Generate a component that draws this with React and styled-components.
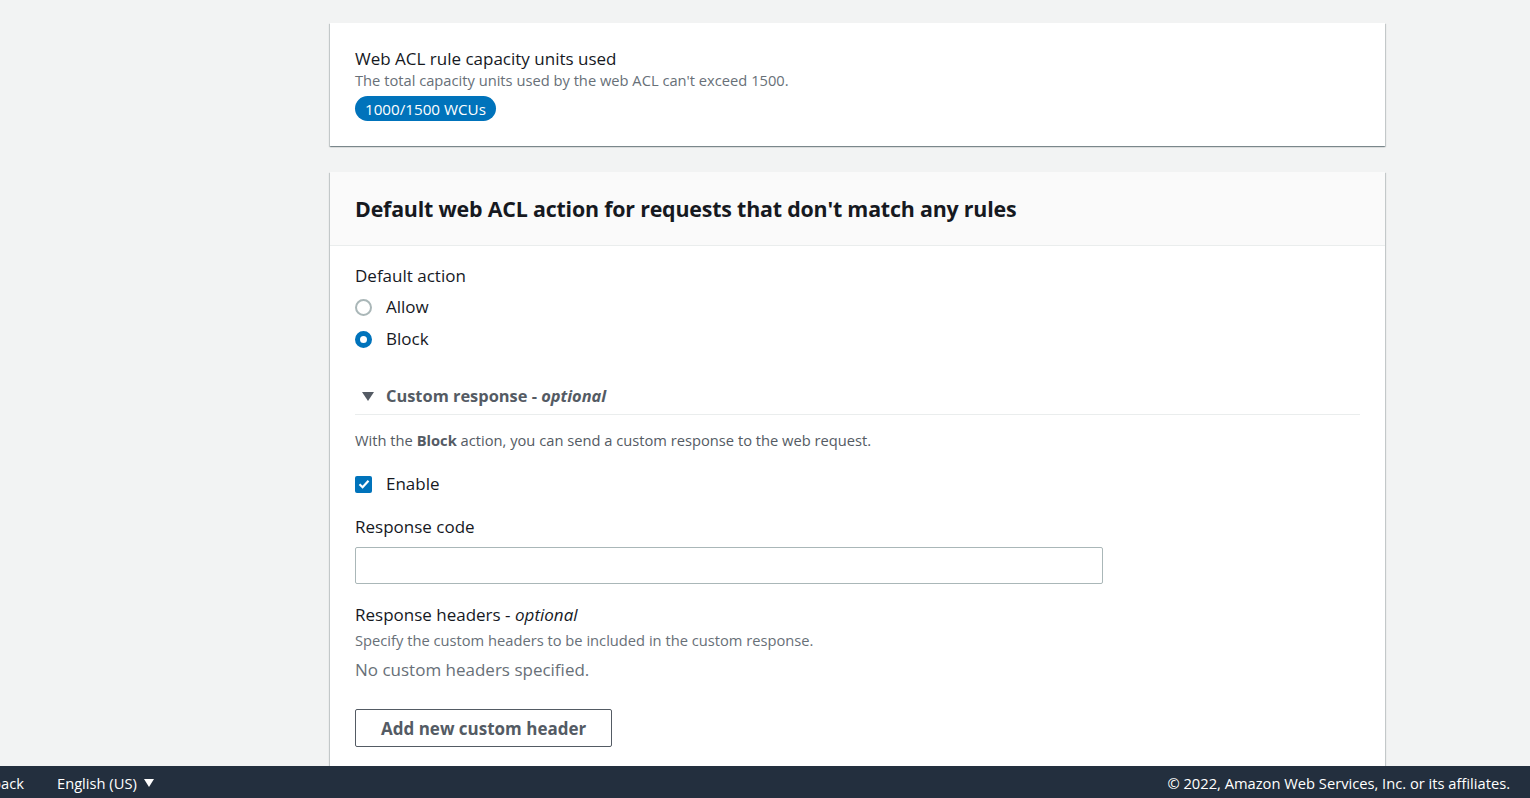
import React from "react";
import styled, { createGlobalStyle } from "styled-components";

const GlobalStyle = createGlobalStyle`
  html, body {
    margin: 0;
    padding: 0;
    background: #f2f3f3;
    font-family: "Open Sans", "Noto Sans", sans-serif;
    color: #16191f;
  }
  * { box-sizing: border-box; }
`;

const Page = styled.div`
  height: 798px;
  display: flex;
  flex-direction: column;
  overflow: hidden;
`;

const Main = styled.div`
  flex: 1;
  overflow: hidden;
  padding: 23px 0 0 330px;
  display: flex;
  flex-direction: column;
  gap: 26px;
`;

const Card = styled.section`
  width: 1055px;
  background: #fff;
  box-shadow: 0 1px 1px 0 rgba(0, 28, 36, 0.3), 1px 1px 1px 0 rgba(0, 28, 36, 0.15),
    -1px 1px 1px 0 rgba(0, 28, 36, 0.15);
  flex-shrink: 0;
`;

const CardBody = styled.div`
  padding: ${(p) => p.$pad || "20px 25px"};
`;

const CardHeader = styled.div`
  background: #fafafa;
  border-bottom: 1px solid #eaeded;
  padding: 23px 25px 22px;
`;

const HeaderTitle = styled.h2`
  margin: 0;
  font-size: 21.4px;
  line-height: 28px;
  font-weight: 700;
  letter-spacing: -0.2px;
`;

const Label = styled.div`
  font-size: 17px;
  line-height: 22px;
`;

const Hint = styled.div`
  font-size: 14.7px;
  line-height: 20px;
  color: #687078;
  margin-top: ${(p) => p.$mt || 0}px;
`;

const Badge = styled.span`
  display: inline-flex;
  align-items: center;
  height: 25px;
  padding: 0 10px;
  margin-top: 6px;
  border-radius: 13px;
  background: #0073bb;
  color: #fff;
  font-size: 15.2px;
  font-weight: 500;
`;

const RadioGroup = styled.div`
  display: flex;
  flex-direction: column;
  gap: 10px;
  margin-top: 9px;
`;

const Option = styled.label`
  display: flex;
  align-items: center;
  gap: 14px;
  font-size: 17px;
  line-height: 22px;
`;

const RadioDot = styled.span`
  width: 17px;
  height: 17px;
  border-radius: 50%;
  border: ${(p) => (p.$checked ? "5px solid #0073bb" : "2px solid #aab7b8")};
  background: #fff;
  flex-shrink: 0;
`;

const Expander = styled.div`
  margin-top: 35px;
  display: flex;
  align-items: center;
  gap: 12px;
  padding: 0 0 7px 7px;
  border-bottom: 1px solid #eaeded;
  font-size: 16.4px;
  font-weight: 700;
  color: #545b64;
  line-height: 22px;

  em { font-weight: 700; }
`;

const Caret = styled.span`
  width: 0;
  height: 0;
  border-left: 6px solid transparent;
  border-right: 6px solid transparent;
  border-top: 9px solid #545b64;
`;

const Para = styled.p`
  margin: 15px 0 0;
  font-size: 14.7px;
  line-height: 20px;
  color: #545b64;
  b { font-weight: 700; }
`;

const CheckRow = styled(Option)`
  margin-top: 23px;
`;

const CheckBox = styled.span`
  width: 17px;
  height: 17px;
  border-radius: 2px;
  background: #0073bb;
  display: flex;
  align-items: center;
  justify-content: center;
  flex-shrink: 0;
`;

const Field = styled.div`
  margin-top: ${(p) => p.$mt}px;
`;

const Input = styled.input`
  display: block;
  width: 748px;
  height: 37px;
  margin-top: 9px;
  border: 1px solid #aab7b8;
  border-radius: 2px;
  font: inherit;
  padding: 0 10px;
  outline: none;
`;

const Empty = styled.div`
  margin-top: 9px;
  font-size: 17px;
  line-height: 22px;
  color: #687078;
`;

const Button = styled.button`
  margin-top: 28px;
  height: 38px;
  padding: 0 25px;
  border: 1px solid #545b64;
  border-radius: 2px;
  background: #fff;
  color: #545b64;
  font: inherit;
  font-size: 17px;
  font-weight: 700;
`;

const Footer = styled.footer`
  height: 32px;
  flex-shrink: 0;
  background: #232f3e;
  color: #fff;
  font-size: 14.7px;
  display: flex;
  align-items: center;
  padding: 1px 20px 0 0;
`;

const FooterLink = styled.span`
  margin-left: ${(p) => p.$ml}px;
  display: flex;
  align-items: center;
  gap: 7px;
  white-space: nowrap;
`;

const SmallCaret = styled.span`
  width: 0;
  height: 0;
  border-left: 5px solid transparent;
  border-right: 5px solid transparent;
  border-top: 8px solid #fff;
`;

const Copyright = styled.span`
  margin-left: auto;
`;

const App = () => (
  <>
    <GlobalStyle />
    <Page>
      <Main>
        <Card>
          <CardBody $pad="25px 25px 25px">
            <Label>Web ACL rule capacity units used</Label>
            <Hint>The total capacity units used by the web ACL can't exceed 1500.</Hint>
            <Badge>1000/1500 WCUs</Badge>
          </CardBody>
        </Card>
        <Card>
          <CardHeader>
            <HeaderTitle>Default web ACL action for requests that don't match any rules</HeaderTitle>
          </CardHeader>
          <CardBody $pad="19px 25px 40px">
            <Label>Default action</Label>
            <RadioGroup>
              <Option>
                <RadioDot />
                Allow
              </Option>
              <Option>
                <RadioDot $checked />
                Block
              </Option>
            </RadioGroup>
            <Expander>
              <Caret />
              <span>
                Custom response - <em>optional</em>
              </span>
            </Expander>
            <Para>
              With the <b>Block</b> action, you can send a custom response to the web request.
            </Para>
            <CheckRow>
              <CheckBox>
                <svg width="12" height="10" viewBox="0 0 12 10">
                  <path d="M1.5 5.2 L4.6 8.2 L10.5 1.8" fill="none" stroke="#fff" strokeWidth="2.2" />
                </svg>
              </CheckBox>
              Enable
            </CheckRow>
            <Field $mt={21}>
              <Label>Response code</Label>
              <Input />
            </Field>
            <Field $mt={20}>
              <Label>
                Response headers - <em>optional</em>
              </Label>
              <Hint $mt={4}>Specify the custom headers to be included in the custom response.</Hint>
              <Empty>No custom headers specified.</Empty>
              <Button>Add new custom header</Button>
            </Field>
          </CardBody>
        </Card>
      </Main>
      <Footer>
        <FooterLink $ml={-41}>Feedback</FooterLink>
        <FooterLink $ml={33}>
          English (US) <SmallCaret />
        </FooterLink>
        <Copyright>© 2022, Amazon Web Services, Inc. or its affiliates.</Copyright>
      </Footer>
    </Page>
  </>
);

export default App;
